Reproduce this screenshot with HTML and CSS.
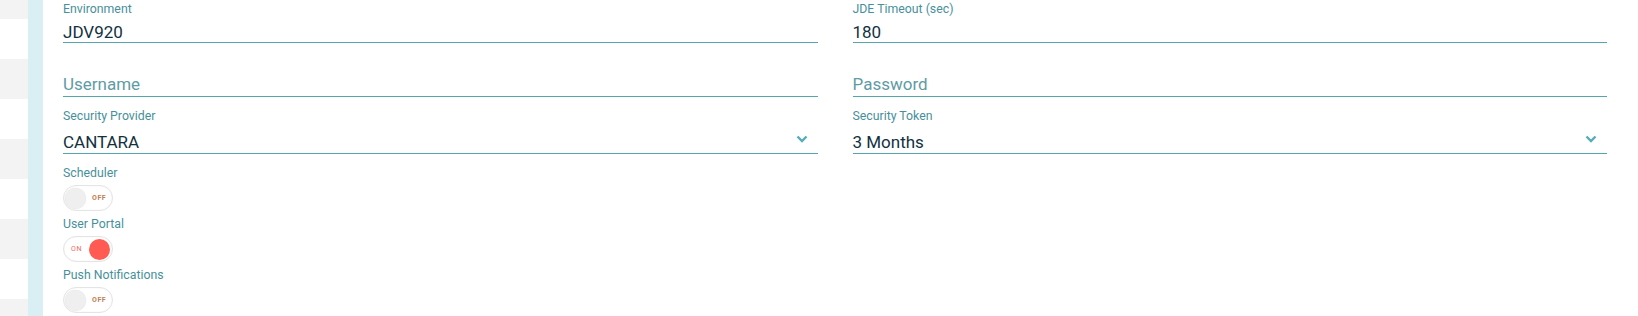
FILE: index.html
```html
<!DOCTYPE html>
<html lang="en">
<head>
    <meta charset="UTF-8">
    <meta name="viewport" content="width=device-width, initial-scale=1.0">
    <title>Connection settings</title>
    <link rel="stylesheet" href="styles.css">
</head>
<body>

    <div class="rows">
        <div class="row first"></div>
        <div class="row"></div>
        <div class="row"></div>
        <div class="row"></div>
        <div class="row"></div>
        <div class="row"></div>
        <div class="row"></div>
        <div class="row"></div>
        <div class="row last"></div>
    </div>

    <div class="rail"></div>

    <div class="main">
        <div class="fields">
            <div class="field">
                <div class="label">Environment</div>
                <div class="input">JDV920</div>
            </div>
            <div class="field">
                <div class="label">JDE Timeout (sec)</div>
                <div class="input">180</div>
            </div>

            <div class="field">
                <div class="label"></div>
                <div class="input empty">Username</div>
            </div>
            <div class="field">
                <div class="label"></div>
                <div class="input empty">Password</div>
            </div>

            <div class="field">
                <div class="label">Security Provider</div>
                <div class="input select">
                    <span>CANTARA</span>
                    <svg class="chevron" width="12" height="8" viewBox="0 0 12 8">
                        <polyline points="1.5,1.5 6,6 10.5,1.5" fill="none" stroke="#55adbb" stroke-width="2.4"/>
                    </svg>
                </div>
            </div>
            <div class="field">
                <div class="label">Security Token</div>
                <div class="input select">
                    <span>3 Months</span>
                    <svg class="chevron" width="12" height="8" viewBox="0 0 12 8">
                        <polyline points="1.5,1.5 6,6 10.5,1.5" fill="none" stroke="#55adbb" stroke-width="2.4"/>
                    </svg>
                </div>
            </div>
        </div>

        <div class="switches">
            <div class="label">Scheduler</div>
            <div class="toggle">
                <div class="knob"></div>
                <span class="state">OFF</span>
            </div>

            <div class="label">User Portal</div>
            <div class="toggle on">
                <span class="state">ON</span>
                <div class="knob"></div>
            </div>

            <div class="label">Push Notifications</div>
            <div class="toggle">
                <div class="knob"></div>
                <span class="state">OFF</span>
            </div>
        </div>
    </div>

</body>
</html>
```

FILE: styles.css
```css
* {
    box-sizing: border-box;
}

body {
    margin: 0;
    height: 316px;
    overflow: hidden;
    display: flex;
    background-color: #fff;
    font-family: Roboto, "Liberation Sans", sans-serif;
}

.rows {
    width: 28px;
    flex-shrink: 0;
    display: flex;
    flex-direction: column;
    overflow: hidden;
}

.row {
    height: 40px;
    flex-shrink: 0;
}

.row.first {
    height: 19px;
}

.row.last {
    height: 17px;
}

.row:nth-child(odd) {
    background-color: #f3f3f3;
}

.rail {
    width: 15px;
    flex-shrink: 0;
    background-color: #daeff4;
}

.main {
    flex: 1;
    padding: 2px 31px 0 20px;
}

.fields {
    display: grid;
    grid-template-columns: 1fr 1fr;
    column-gap: 35px;
    row-gap: 12px;
}

.label {
    font-size: 12.3px;
    line-height: 14px;
    height: 14px;
    color: #47909b;
}

.input {
    font-size: 17px;
    line-height: 20px;
    padding: 6px 0 0;
    color: #12313f;
    border-bottom: 1px solid #55a5ae;
}

.input.empty {
    padding: 5px 0 2px;
    color: #5f9ba5;
}

.input.select {
    padding: 9px 0 1px;
    display: flex;
    justify-content: space-between;
    align-items: flex-start;
}

.chevron {
    margin: 3px 10px 0 0;
}

.switches {
    margin-top: 11.5px;
}

.toggle {
    width: 50px;
    height: 26px;
    margin: 5.5px 0;
    border: 1px solid #e4e4e4;
    border-radius: 13px;
    background-color: #fff;
    box-shadow: inset 0 0 2px rgba(0, 0, 0, 0.06);
    display: flex;
    align-items: center;
    padding: 0 2px 0 1px;
}

.toggle:last-child {
    margin-bottom: 0;
}

.knob {
    width: 21px;
    height: 21px;
    border-radius: 50%;
    background-color: #efefef;
    box-shadow: 0 0 1px rgba(0, 0, 0, 0.15);
}

.state {
    font-size: 7px;
    font-weight: bold;
    letter-spacing: 0.6px;
    color: #c0804f;
    margin-left: 6px;
}

.toggle.on {
    padding: 0 2px 0 7px;
    justify-content: space-between;
}

.toggle.on .state {
    color: #f06a62;
    font-weight: normal;
    margin-left: 0;
}

.toggle.on .knob {
    background-color: #ff5b52;
    box-shadow: none;
}
```
